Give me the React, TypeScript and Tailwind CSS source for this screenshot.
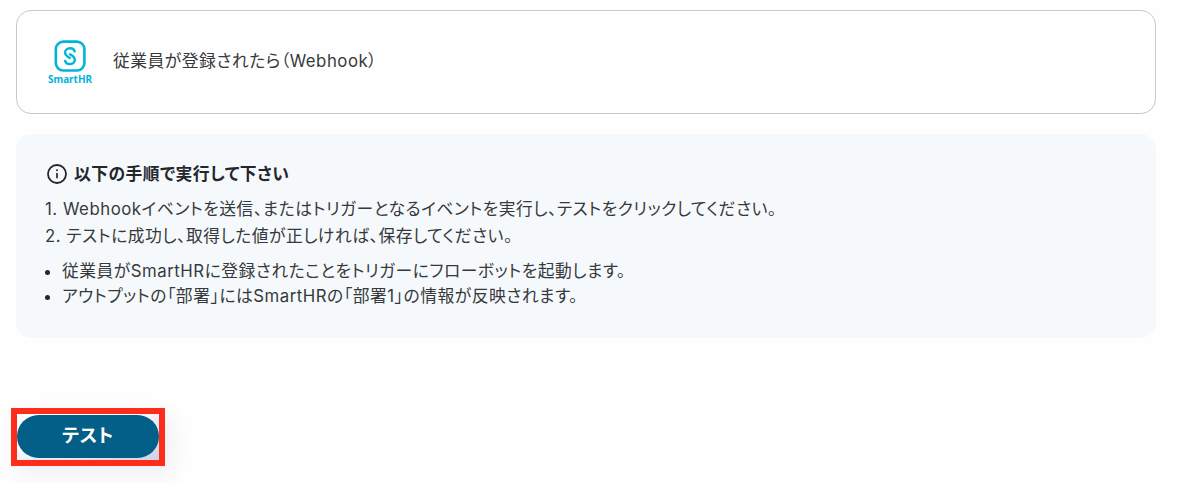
const steps = [
  'Webhookイベントを送信、またはトリガーとなるイベントを実行し、テストをクリックしてください。',
  'テストに成功し、取得した値が正しければ、保存してください。',
];

const notes = [
  '従業員がSmartHRに登録されたことをトリガーにフローボットを起動します。',
  'アウトプットの「部署」にはSmartHRの「部署1」の情報が反映されます。',
];

function SmartHRLogo() {
  return (
    <svg width="46" height="48" viewBox="0 0 46 48" className="shrink-0" fill="none" stroke="#00b5d8">
      <rect x="7.8" y="3.6" width="28.6" height="28.9" rx="7.5" strokeWidth="2.6" />
      {/* Two interlocking hooks */}
      <path
        d="M26.8 14.4C26.6 11.9 24.6 10.3 22 10.3C19.1 10.3 17 12.2 17 14.6C17 16.4 17.8 17.4 19.4 18.5L22.6 20.6M17 21.8C17.2 24.4 19.2 26 21.8 26C24.7 26 26.8 24.2 26.8 21.7C26.8 19.9 26 18.9 24.4 17.8L21.2 15.7"
        strokeWidth="2.4"
      />
      <text
        x="0"
        y="45"
        textLength="44"
        lengthAdjust="spacingAndGlyphs"
        fill="#00b5d8"
        stroke="none"
        className="font-['Noto_Sans',sans-serif] text-[10.5px] font-bold tracking-normal"
      >
        SmartHR
      </text>
    </svg>
  );
}

function InfoIcon() {
  return (
    <svg width="22" height="22" viewBox="0 0 22 22" className="shrink-0" fill="none" stroke="#23272c">
      <circle cx="11" cy="11" r="9" strokeWidth="1.8" />
      <path d="M11 10v5.2" strokeWidth="1.7" />
      <circle cx="11" cy="7.3" r="1" fill="#23272c" stroke="none" />
    </svg>
  );
}

export default function App() {
  return (
    <main className="h-[483px] overflow-hidden bg-[#fefefe] pt-2.5 pl-4 font-['Inter','Noto_Sans_CJK_JP',sans-serif] text-[16.8px] tracking-[0.51px] text-[#36393c] [font-feature-settings:'palt']">
      {/* Trigger card */}
      <section className="flex h-[104px] w-[1140px] items-center rounded-[15px] border border-[#c8c8c8] pl-[31px]">
        <SmartHRLogo />
        <p className="mb-0.5 ml-[19px] leading-6">従業員が登録されたら（Webhook）</p>
      </section>

      {/* Instructions */}
      <section className="mt-5 h-[204px] w-[1140px] rounded-[15px] bg-[#f5f9fc] pt-7 pl-[29px]">
        <h2 className="flex h-6 items-center gap-1.5 pl-px font-bold tracking-[0.45px] text-[#23272c]">
          <InfoIcon />
          <span className="pt-0.5">以下の手順で実行して下さい</span>
        </h2>
        <ol className="mt-2.5 leading-[27px]">
          {steps.map((step, i) => (
            <li key={step}>
              {i + 1}. {step}
            </li>
          ))}
        </ol>
        <ul className="mt-[9px] leading-[25px]">
          {notes.map((note) => (
            <li key={note} className="flex items-center gap-3">
              <span className="mt-0.5 size-[5px] rounded-full bg-[#23272c]" />
              {note}
            </li>
          ))}
        </ul>
      </section>

      {/* Highlighted test button */}
      <div className="mt-[70px] -ml-[5px] h-[58px] w-[154px] border-6 border-[#fc2d1a] bg-linear-to-br from-white from-30% to-[#d0d3e2] pt-px shadow-[6px_8px_20px_rgba(90,70,130,0.09)]">
        <button className="h-[43px] w-full rounded-full bg-[#035f87] pb-0.5 text-[18.5px] font-bold tracking-[0.6px] text-white">
          テスト
        </button>
      </div>
    </main>
  );
}
